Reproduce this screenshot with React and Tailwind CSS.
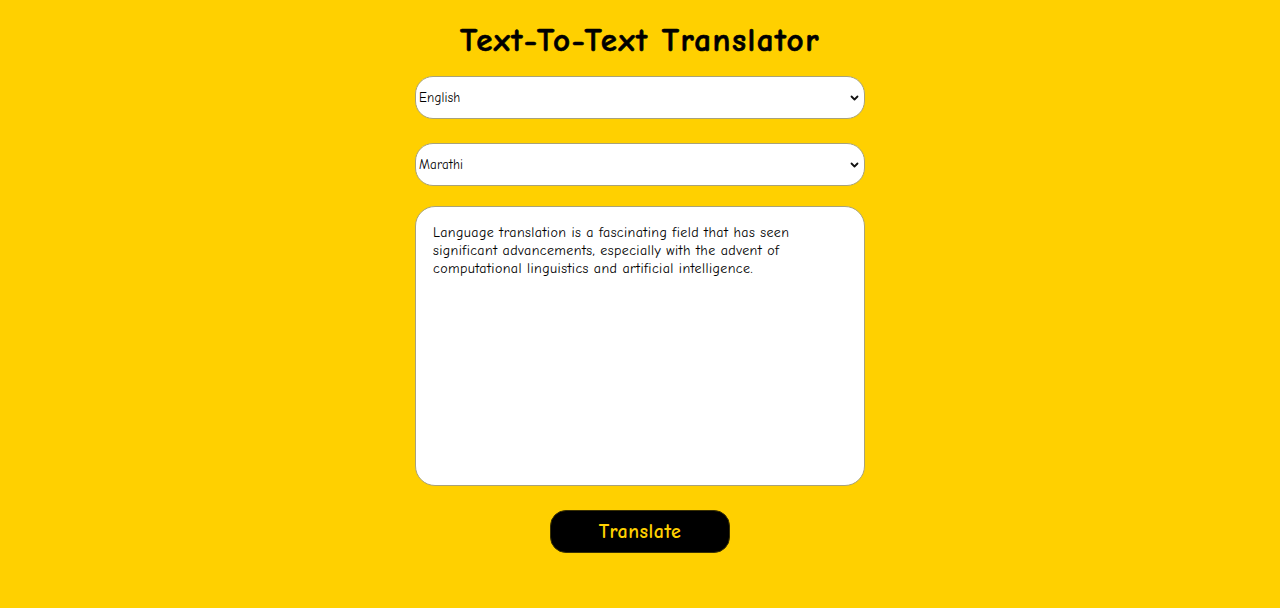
import { useState } from 'react';

const LANGS = ['English', 'Marathi', 'Hindi', 'Spanish', 'French', 'German'];

function LangSelect({ value, onChange }) {
    return (
        <div className="relative w-full">
            <select
                value={value}
                onChange={(e) => onChange(e.target.value)}
                className="block h-[43px] w-full appearance-none rounded-[18px] border border-[#a8a27a] bg-white pl-[3px] pr-8 text-[13px] tracking-[0.2px] text-black outline-none"
            >
                {LANGS.map((l) => (
                    <option key={l} value={l}>{l}</option>
                ))}
            </select>
            <svg
                className="pointer-events-none absolute right-[6px] top-[18px] h-[8px] w-[9px]"
                viewBox="0 0 9 8"
                fill="none"
                stroke="#111"
                strokeWidth="1.8"
                strokeLinecap="round"
                strokeLinejoin="round"
            >
                <path d="M1.5 2.5 L4.5 5.5 L7.5 2.5" />
            </svg>
        </div>
    );
}

export default function App() {
    const [from, setFrom] = useState('English');
    const [to, setTo] = useState('Marathi');
    const [text, setText] = useState(
        'Language translation is a fascinating field that has seen significant advancements, especially with the advent of computational linguistics and artificial intelligence.'
    );

    return (
        <div
            className="min-h-[608px] w-full bg-[#ffd000] font-['Comic_Sans_MS','Comic_Neue','Noto_Sans',sans-serif] text-black"
        >
            <div className="mx-auto flex w-[450px] flex-col items-center pt-[20px]">
                <h1 className="text-[33px] font-bold leading-[40px] tracking-[1.5px] [-webkit-text-stroke:0.6px_black]">Text-To-Text Translator</h1>

                <div className="mt-[16px] w-full">
                    <LangSelect value={from} onChange={setFrom} />
                </div>
                <div className="mt-[24px] w-full">
                    <LangSelect value={to} onChange={setTo} />
                </div>

                <textarea
                    value={text}
                    onChange={(e) => setText(e.target.value)}
                    className="mt-[20px] block h-[280px] w-full resize-none rounded-[20px] border border-[#a8a27a] bg-white px-[17px] pt-[17px] text-[14px] leading-[18px] tracking-[0.4px] text-black outline-none"
                />

                <button
                    type="button"
                    className="mt-[24px] h-[43px] w-[180px] rounded-[16px] border border-[#3a3000] bg-black text-[20px] font-bold tracking-[0.5px] text-[#ffd000]"
                >
                    Translate
                </button>
            </div>
        </div>
    );
}
